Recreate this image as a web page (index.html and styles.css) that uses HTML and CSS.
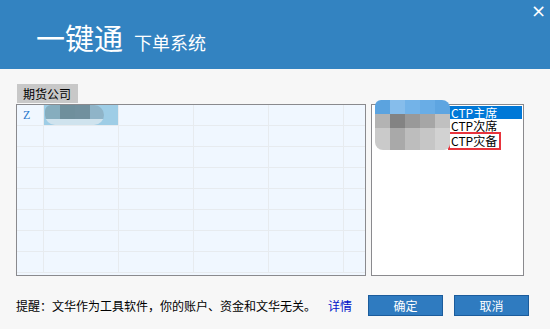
FILE: index.html
```html
<!DOCTYPE html>
<html lang="zh-CN">
  <head>
    <meta charset="UTF-8" />
    <title>一键通 下单系统</title>
    <link rel="stylesheet" href="styles.css">
  </head>
  <body>
    <!-- title bar -->
    <div class="head">
      <span class="brand">一键通</span>
      <span class="sub">下单系统</span>
      <span class="close">&times;</span>
    </div>

    <div class="main">
      <div class="tab">期货公司</div>

      <div class="panels">
        <!-- broker grid -->
        <div class="grid">
          <div class="cell first">Z</div>
          <div class="cell picked"><span class="mask"></span></div>
          <div class="cell"></div><div class="cell"></div><div class="cell"></div><div class="cell"></div>
          <div class="cell"></div><div class="cell"></div><div class="cell"></div><div class="cell"></div><div class="cell"></div><div class="cell"></div>
          <div class="cell"></div><div class="cell"></div><div class="cell"></div><div class="cell"></div><div class="cell"></div><div class="cell"></div>
          <div class="cell"></div><div class="cell"></div><div class="cell"></div><div class="cell"></div><div class="cell"></div><div class="cell"></div>
          <div class="cell"></div><div class="cell"></div><div class="cell"></div><div class="cell"></div><div class="cell"></div><div class="cell"></div>
          <div class="cell"></div><div class="cell"></div><div class="cell"></div><div class="cell"></div><div class="cell"></div><div class="cell"></div>
          <div class="cell"></div><div class="cell"></div><div class="cell"></div><div class="cell"></div><div class="cell"></div><div class="cell"></div>
          <div class="cell"></div><div class="cell"></div><div class="cell"></div><div class="cell"></div><div class="cell"></div><div class="cell"></div>
        </div>

        <!-- server list -->
        <div class="servers">
          <div class="mosaic">
            <i class="b1"></i><i class="b2"></i><i class="b3"></i><i class="b4"></i><i class="b5"></i>
            <i class="g1"></i><i class="g2"></i><i class="g3"></i><i class="g4"></i><i class="g5"></i>
            <i class="l1"></i><i class="l2"></i><i class="l3"></i><i class="l4"></i><i class="l5"></i>
          </div>
          <ul class="list">
            <li class="sel">CTP主席</li>
            <li>CTP次席</li>
            <li><span class="mark">CTP灾备</span></li>
          </ul>
        </div>
      </div>

      <div class="foot">
        <p class="tip">提醒：文华作为工具软件，你的账户、资金和文华无关。<a href="#">详情</a></p>
        <div class="btns">
          <button class="btn">确定</button>
          <button class="btn">取消</button>
        </div>
      </div>
    </div>
  </body>
</html>
```

FILE: styles.css
```css
* {
  box-sizing: border-box;
}

body {
  margin: 0;
  width: 550px;
  height: 329px;
  background-color: #f7f7f7;
  font-family: "Noto Sans CJK SC", "DejaVu Sans", sans-serif;
  font-size: 12px;
  color: #000;
  overflow: hidden;
}

.head {
  position: relative;
  height: 69px;
  background-color: #3383c1;
  color: #fff;
  padding: 17px 0 0 36px;
  display: flex;
  align-items: baseline;
}

.head .brand {
  font-size: 29px;
  line-height: 40px;
}

.head .sub {
  font-size: 18px;
  margin-left: 11px;
}

.head .close {
  position: absolute;
  top: 1px;
  right: 4px;
  font-family: "DejaVu Sans", sans-serif;
  font-size: 18px;
  line-height: 20px;
}

.main {
  padding: 15px 0 0 16px;
}

.tab {
  width: 61px;
  height: 19px;
  margin-left: 1px;
  background-color: #c8c8c8;
  line-height: 19px;
  padding-left: 6px;
  font-size: 12px;
}

.panels {
  display: flex;
  gap: 5px;
  margin-top: 1px;
}

.grid {
  width: 350px;
  height: 172px;
  border: 1px solid #8a8a8e;
  background-color: #f0f7ff;
  display: grid;
  grid-template-columns: 27px repeat(4, 75px) 1fr;
  grid-auto-rows: 21px;
  overflow: hidden;
}

.cell {
  border-right: 1px solid #e7ebef;
  border-bottom: 1px solid #e7ebef;
}

.cell:nth-child(6n) {
  border-right: none;
}

.cell.first {
  color: #2a78cc;
  font-family: "Liberation Serif", serif;
  font-size: 12px;
  line-height: 20px;
  padding-left: 6px;
}

.cell.picked {
  background-color: #9ecde6;
  padding: 0 14px 0 1px;
}

.cell.picked .mask {
  display: block;
  height: 20px;
  border-radius: 6px 10px 10px 10px;
  background:
    linear-gradient(#0000 14px, #cfe3ee 14px),
    linear-gradient(90deg, #86adbe 0 15px, #6f8f9c 15px 30px, #71909e 30px 45px, #8fb4c8 45px);
}

.servers {
  position: relative;
  width: 153px;
  height: 172px;
  border: 1px solid #8a8a8e;
  background-color: #fff;
}

.mosaic {
  position: absolute;
  top: -5px;
  left: 3px;
  width: 75px;
  height: 50px;
  display: grid;
  grid-template-columns: repeat(5, 15px);
  grid-template-rows: 14px 14px 22px;
  border-radius: 6px 8px 6px 8px;
  overflow: hidden;
}

.mosaic i { display: block; }
.mosaic .b1 { background: #5ba3df; }
.mosaic .b2 { background: #86bdeb; }
.mosaic .b3 { background: #73b3e8; }
.mosaic .b4 { background: #69ade6; }
.mosaic .b5 { background: #5ea5e1; }
.mosaic .g1 { background: #b3b3b3; }
.mosaic .g2 { background: #838383; }
.mosaic .g3 { background: #999; }
.mosaic .g4 { background: #a6a6a6; }
.mosaic .g5 { background: #c0c0c0; }
.mosaic .l1 { background: #cacaca; }
.mosaic .l2 { background: #a9a9a9; }
.mosaic .l3 { background: #bdbdbd; }
.mosaic .l4 { background: #c6c6c6; }
.mosaic .l5 { background: #d2d2d2; }

.list {
  list-style: none;
  margin: 0;
  padding: 1px 1px 0 77px;
  font-size: 12px;
  line-height: 13px;
}

.list li {
  height: 13px;
  padding-left: 2px;
  white-space: nowrap;
}

.list li.sel {
  background-color: #0078d7;
  color: #fff;
}

.list .mark {
  display: inline-block;
  height: 14px;
  line-height: 14px;
  vertical-align: top;
  margin: 2px 0 0 -1px;
  padding: 0 2px 0 1px;
  outline: 2px solid #e8333c;
}

.foot {
  display: flex;
  align-items: center;
  margin-top: 19px;
}

.tip {
  margin: 0;
  width: 352px;
  font-size: 12px;
}

.tip a {
  color: #0010c8;
  text-decoration: none;
  margin-left: 12px;
}

.btns {
  display: flex;
  gap: 11px;
}

.btn {
  width: 75px;
  height: 21px;
  padding: 0;
  background-color: #2f7bc0;
  border: 1px solid #1b5c9c;
  color: #fff;
  font-family: "Noto Sans CJK SC", sans-serif;
  font-size: 12px;
  line-height: 19px;
}
```
